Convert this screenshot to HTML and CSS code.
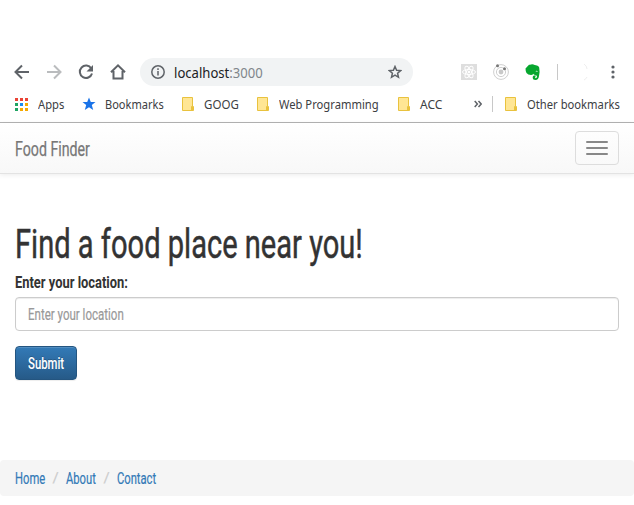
FILE: index.html
```html
<!DOCTYPE html>
<html lang="en">
<head>
<meta charset="utf-8">
<title>Food Finder</title>
<link rel="stylesheet" href="styles.css">
</head>
<body>
<header class="browser">
  <div class="toolbar">
    <svg class="ic back" width="16" height="16" viewBox="0 0 16 16"><path d="M15 8H2M8 1.500L1.500 8L8 14.500"/></svg>
    <svg class="ic forward" width="16" height="16" viewBox="0 0 16 16"><path d="M1 8h13M8 1.500L14.500 8L8 14.500"/></svg>
    <svg class="ic reload" width="16" height="16" viewBox="0 0 16 16"><path d="M13.300 4.500A6.200 6.200 0 1 0 14 9.500"/><path class="solid" d="M15 1v6.500H8.500z"/></svg>
    <svg class="ic home" width="16" height="16" viewBox="0 0 16 16"><path d="M1 8.200L8 1.400L15 8.200M3.500 7V14.500H12.500V7"/></svg>
    <div class="omnibox">
      <svg class="ic info" width="14" height="14" viewBox="0 0 14 14"><circle cx="7" cy="7" r="6.200"/><path d="M7 6v4.500M7 3.300v1.600"/></svg>
      <span class="url">localhost<span class="port">:3000</span></span>
      <svg class="ic star" width="14" height="14" viewBox="0 0 14 14"><path d="M7 1.500L8.600 5.200L12.700 5.600L9.600 8.300L10.500 12.300L7 10.200L3.500 12.300L4.400 8.300L1.300 5.600L5.400 5.200Z"/></svg>
    </div>
    <svg class="react" width="16" height="16" viewBox="0 0 16 16"><rect width="16" height="16" fill="#dedede"/><g fill="none" stroke="#fff"><ellipse cx="8" cy="8" rx="6.500" ry="2.500"/><ellipse cx="8" cy="8" rx="6.500" ry="2.500" transform="rotate(60 8 8)"/><ellipse cx="8" cy="8" rx="6.500" ry="2.500" transform="rotate(120 8 8)"/></g><circle cx="8" cy="8" r="1.300" fill="#fff"/></svg>
    <svg class="orbit" width="16" height="16" viewBox="0 0 16 16"><g fill="none" stroke="#cfcfcf"><circle cx="8" cy="8" r="7.400"/><circle cx="8" cy="8" r="4.600"/></g><circle cx="8" cy="8" r="2.400" fill="#c8c8c8"/><circle cx="4.500" cy="1.800" r="1.500" fill="#777"/><circle cx="11.500" cy="4.800" r="1.500" fill="#777"/></svg>
    <svg class="evernote" width="16" height="16" viewBox="0 0 16 16"><path fill="#07a72f" d="M5 .8Q6.500 0 8.500.5Q9.500 1.200 11 1.200Q13.700 1.500 14.200 3.500Q15 7.500 14 12Q13.500 16 10.500 16Q7.700 16 7.700 13.500Q7.700 11.300 10.500 11.300V13Q9.500 13.500 10.500 14.300Q12 14.300 12 12.500Q12 11 10 11Q8.500 10.800 8.300 9.800Q7.700 11 6 11Q3 11 1.500 9Q.5 7.500.5 4.500L4 .8Z"/><path d="M10.500 7.500Q11.500 6 13 7.800Q11.500 7.200 10.500 7.500Z" fill="#fff"/></svg>
    <i class="rule"></i>
    <svg class="avatar" width="16" height="18" viewBox="0 0 16 18"><path d="M12 1Q15 3 15 6M12 17Q14 16 15 14" fill="none" stroke="#eee"/></svg>
    <svg class="more" width="4" height="14" viewBox="0 0 4 14"><g fill="#5f6368"><circle cx="2" cy="2" r="1.600"/><circle cx="2" cy="7" r="1.600"/><circle cx="2" cy="12" r="1.600"/></g></svg>
  </div>
  <nav class="bookmarks">
    <span class="bm apps"><svg width="13" height="13" viewBox="0 0 13 13"><path fill="#ea4335" d="M0 0h3v3H0zM5 0h3v3H5zM10 0h3v3h-3z"/><path fill="#1fa463" d="M0 5h3v3H0zM0 10h3v3H0z"/><path fill="#1a8cf0" d="M5 5h3v3H5z"/><path fill="#f5a900" d="M10 5h3v3h-3zM5 10h3v3H5zM10 10h3v3h-3z"/></svg><b>Apps</b></span>
    <span class="bm marks"><svg width="14" height="14" viewBox="0 0 14 14"><path fill="#1a73e8" d="M7 .5L8.800 5H13.500L9.800 8L11.200 13L7 10.200L2.800 13L4.200 8L.5 5H5.200Z"/></svg><b>Bookmarks</b></span>
    <span class="bm goog"><svg width="12" height="14" viewBox="0 0 12 14"><path class="folder" d="M.5.5h10v9h1v4H.5zM9.500 9.500h1v4h-1z"/></svg><b>GOOG</b></span>
    <span class="bm web"><svg width="12" height="14" viewBox="0 0 12 14"><path class="folder" d="M.5.5h10v9h1v4H.5zM9.500 9.500h1v4h-1z"/></svg><b>Web Programming</b></span>
    <span class="bm acc"><svg width="12" height="14" viewBox="0 0 12 14"><path class="folder" d="M.5.5h10v9h1v4H.5zM9.500 9.500h1v4h-1z"/></svg><b>ACC</b></span>
    <svg class="ic chevrons" width="8" height="8" viewBox="0 0 8 8"><path d="M.7 1L3.400 4L.7 7M4.500 1L7.200 4L4.500 7"/></svg>
    <i class="rule"></i>
    <span class="bm other"><svg width="12" height="14" viewBox="0 0 12 14"><path class="folder" d="M.5.5h10v9h1v4H.5zM9.500 9.500h1v4h-1z"/></svg><b>Other bookmarks</b></span>
  </nav>
</header>
<nav class="navbar">
  <a class="brand"><span class="narrow">Food Finder</span></a>
  <button class="toggle" aria-label="Menu"><i></i><i></i><i></i></button>
</nav>
<main>
  <h1><span class="narrow">Find a food place near you!</span></h1>
  <div class="label"><span class="narrow">Enter your location:</span></div>
  <div class="input"><span class="narrow">Enter your location</span></div>
  <button class="submit"><span class="narrow">Submit</span></button>
</main>
<footer class="breadcrumb">
  <a class="l1"><span class="narrow">Home</span></a><span class="sep">/</span>
  <a class="l2"><span class="narrow">About</span></a><span class="sep">/</span>
  <a class="l3"><span class="narrow">Contact</span></a>
</footer>
</body>
</html>
```
FILE: styles.css
```css
* { box-sizing: border-box; }
body { margin: 0; background: #fff; color: #333; font-family: Roboto, sans-serif; overflow: hidden; }
svg { display: block; flex: none; }
.browser { height: 123px; padding-top: 58px; border-bottom: 1px solid #b3b3b3; font-family: "Noto Sans", sans-serif; }
.toolbar { display: flex; align-items: center; height: 28px; padding-left: 14px; }
.ic { fill: none; stroke: #5f6368; stroke-width: 2; }
.ic .solid { fill: #5f6368; stroke: none; }
.forward { stroke: #babcbe; margin-left: 16px; }
.reload, .home { margin-left: 16px; }
.omnibox { display: flex; align-items: center; justify-content: space-between; width: 273px; height: 28px; margin-left: 14px; padding: 0 11px; border-radius: 14px; background: #f1f3f4; }
.info, .star { stroke-width: 1.5; }
.url { margin: 0 auto 0 9px; font-size: 14px; color: #202124; transform: scaleX(.935); transform-origin: 0 50%; }
.port { color: #80868b; }
.react { margin-left: 48px; }
.orbit, .evernote { margin-left: 16px; }
.rule { width: 1px; height: 16px; background: #c8c8c8; }
.toolbar .rule { margin-left: 16px; }
.avatar { margin-left: 14px; }
.more { margin-left: 22.5px; }
.bookmarks { display: flex; align-items: center; height: 36px; padding-left: 15px; font-size: 12px; color: #3c4043; }
.bm { display: flex; align-items: center; flex: none; white-space: nowrap; }
.bm b { font-weight: 400; transform: scaleX(.935); transform-origin: 0 50%; }
.folder { fill: #ffe694; stroke: #e9c23e; }
.apps { width: 67px; gap: 10px; }
.marks { width: 100px; gap: 9px; }
.marks b { transform: scaleX(.92); }
.goog, .web, .acc, .other { gap: 10px; }
.goog { width: 75px; }
.goog b { transform: scaleX(.96); }
.web { width: 141px; }
.acc { width: 76px; }
.acc b { transform: none; }
.chevrons { stroke-width: 1.5; }
.bookmarks .rule { margin: 0 12px 0 10px; }

.narrow { display: inline-block; white-space: nowrap; transform-origin: 0 50%; }
.navbar { display: flex; justify-content: space-between; align-items: center; height: 51px; padding: 0 15px; border-bottom: 1px solid #e3e3e3; background: linear-gradient(#fff, #f8f8f8); box-shadow: 0 1px 5px rgba(0,0,0,.08); }
.brand { width: 75px; padding-top: 2px; font-size: 20px; color: #777; -webkit-text-stroke: .25px; }
.brand .narrow { transform: scaleX(.71); }
.toggle { display: flex; flex-direction: column; gap: 4px; width: 44px; height: 34px; padding: 9px 10px; border: 1px solid #ddd; border-radius: 4px; background: transparent; }
.toggle i { width: 22px; height: 2px; border-radius: 1px; background: #888; }
main { height: 286px; padding: 46px 15px 0; }
h1 { margin: 0; height: 50px; line-height: 50px; font-size: 40px; font-weight: 400; -webkit-text-stroke: .5px; }
h1 .narrow { transform: scaleX(.727); }
.label { height: 27px; line-height: 26px; font-size: 16px; font-weight: 700; }
.label .narrow { transform: scaleX(.807); }
.input { height: 34px; padding: 0 12px; border: 1px solid #ccc; border-radius: 4px; box-shadow: inset 0 1px 1px rgba(0,0,0,.075); font-size: 16px; line-height: 34px; color: #999; -webkit-text-stroke: .2px; }
.input .narrow { transform: scaleX(.72); }
.submit { display: block; width: 62px; height: 34px; margin-top: 15px; padding: 0 12px; border: 1px solid #245580; border-radius: 4px; background: linear-gradient(#337ab7, #265a88); box-shadow: inset 0 1px 0 rgba(255,255,255,.15), 0 1px 1px rgba(0,0,0,.075); text-align: left; font: 500 16px/34px Roboto, sans-serif; color: #fff; text-shadow: 0 -1px 0 rgba(0,0,0,.2); }
.submit .narrow { transform: scaleX(.71); }
.breadcrumb { display: flex; align-items: center; height: 36px; padding: 0 15px; border-radius: 4px; background: #f5f5f5; font-size: 16px; color: #337ab7; -webkit-text-stroke: .2px; }
.breadcrumb .narrow { transform: scaleX(.7); }
.l1, .l2 { width: 30px; }
.l3 { width: 41px; }
.sep { width: 21px; text-align: center; color: #ccc; font-size: 15px; }
```
